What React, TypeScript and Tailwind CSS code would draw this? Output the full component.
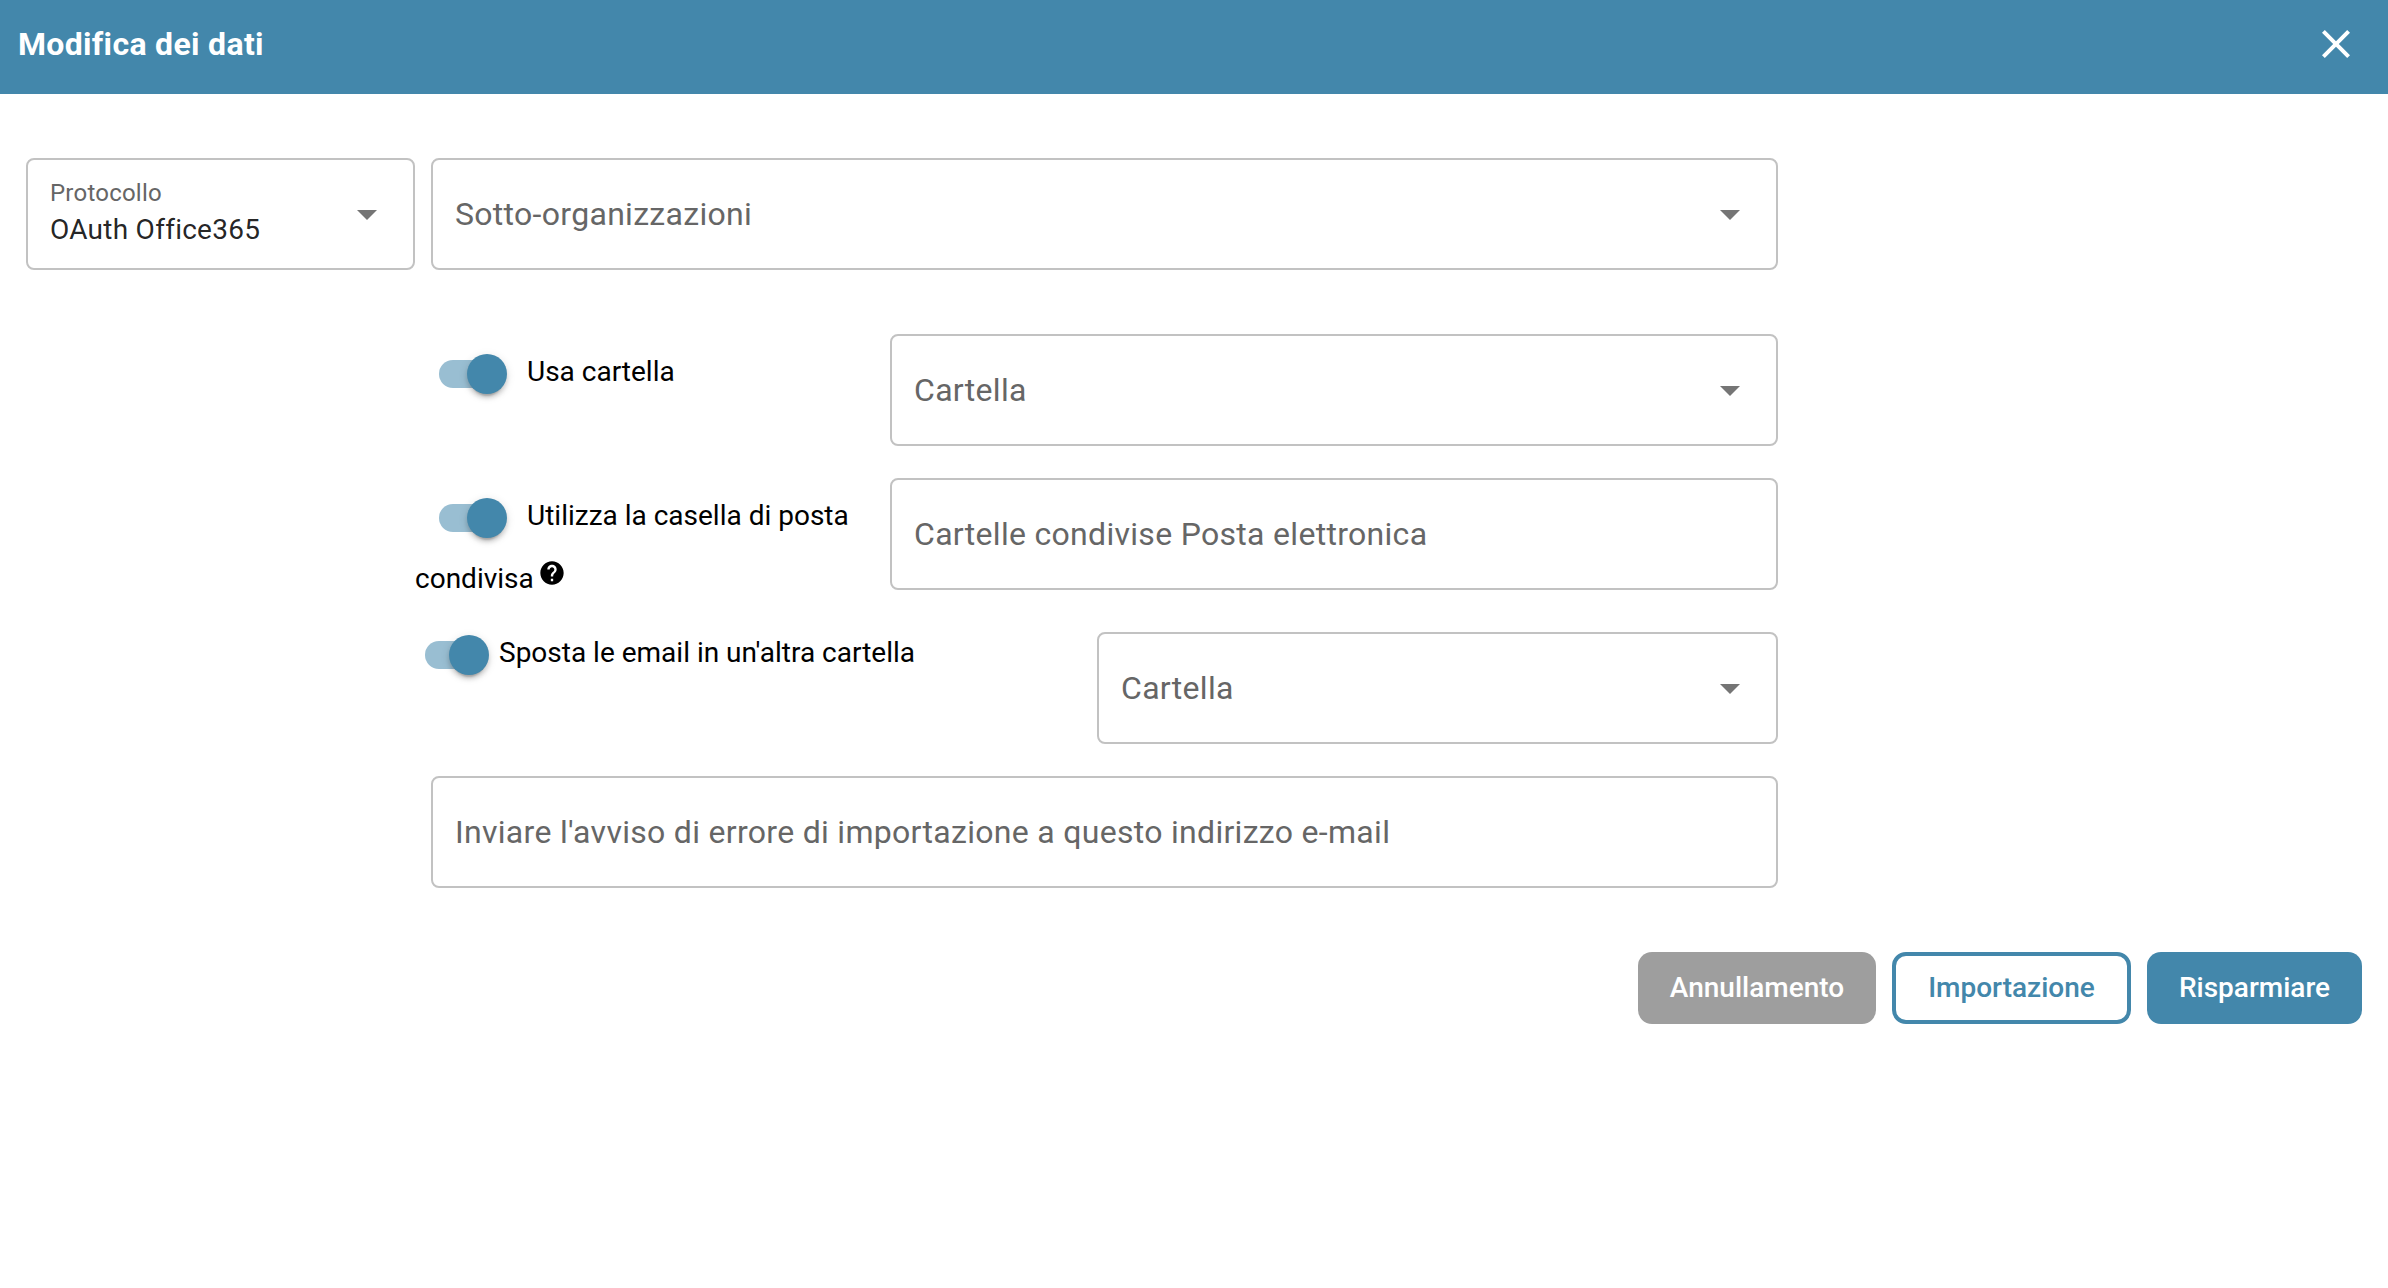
function Arrow() {
  return (
    <svg viewBox="0 0 24 24" className="ml-auto size-12 shrink-0 fill-[#757575]">
      <path d="M7 10l5 5 5-5z" />
    </svg>
  );
}

function Field({ label, className, select = false }: { label: string; className: string; select?: boolean }) {
  return (
    <div className={`flex h-28 items-center rounded-lg border-2 border-[#c2c2c2] px-[22px] ${className}`}>
      <span className="text-[32px] leading-10 tracking-[0.3px] whitespace-nowrap text-[#666666]">{label}</span>
      {select && <Arrow />}
    </div>
  );
}

function Toggle({ className, track }: { className: string; track: string }) {
  return (
    <span className={`flex h-10 shrink-0 items-center ${className}`}>
      <span className={`h-7 rounded-full bg-[#4387ab]/54 ${track}`} />
      <span className="-ml-7 size-10 rounded-full bg-[#4387ab] shadow-[0_6px_2px_-4px_rgba(0,0,0,0.2),0_4px_4px_rgba(0,0,0,0.14),0_2px_10px_rgba(0,0,0,0.12)]" />
    </span>
  );
}

export default function App() {
  return (
    <div className="flex min-h-[1288px] w-full flex-col bg-white font-[Roboto,sans-serif] text-[28px] leading-[42px] text-black">
      <header className="flex h-[94px] items-start justify-between bg-[#4387ab] pr-7 pl-[18px] text-white">
        <h1 className="mt-6 text-[32px] leading-10 font-bold tracking-[0.32px]">Modifica dei dati</h1>
        <svg viewBox="0 0 24 24" className="mt-5 size-12 fill-white">
          <path d="M19 6.41L17.59 5 12 10.59 6.41 5 5 6.41 10.59 12 5 17.59 6.41 19 12 13.41 17.59 19 19 17.59 13.41 12z" />
        </svg>
      </header>

      <main className="flex w-[1778px] flex-col pt-16 pl-[26px]">
        <div className="flex gap-4">
          <div className="flex h-28 w-[389px] items-center rounded-lg border-2 border-[#c2c2c2] px-[22px]">
            <div className="flex flex-col self-start pt-4">
              <span className="mb-px text-2xl leading-[34px] tracking-[0.22px] text-[#666666]">Protocollo</span>
              <span className="leading-[38px] tracking-[0.26px] text-black/87">OAuth Office365</span>
            </div>
            <Arrow />
          </div>
          <Field label="Sotto-organizzazioni" select className="flex-1" />
        </div>

        <div className="mt-16 ml-[389px] flex items-start justify-between">
          <div className="flex items-start pt-5">
            <Toggle className="ml-6" track="w-14" />
            <span className="-mt-[3px] ml-5">Usa cartella</span>
          </div>
          <Field label="Cartella" select className="w-[888px]" />
        </div>

        <div className="mt-8 ml-[389px] flex h-28 items-start justify-between">
          <div className="flex flex-col pt-5">
            <div className="flex items-start">
              <Toggle className="ml-6" track="w-14" />
              <span className="-mt-[3px] ml-5">Utilizza la casella di posta</span>
            </div>
            <div className="mt-5 flex items-start">
              <span>condivisa</span>
              <svg viewBox="0 0 24 24" className="mt-px ml-1 size-7 fill-black">
                <path d="M12 2C6.48 2 2 6.48 2 12s4.48 10 10 10 10-4.48 10-10S17.52 2 12 2zm1 17h-2v-2h2v2zm2.07-7.75l-.9.92C13.45 12.9 13 13.5 13 15h-2v-.5c0-1.1.45-2.1 1.17-2.83l1.24-1.26c.37-.36.59-.86.59-1.41 0-1.1-.9-2-2-2s-2 .9-2 2H8c0-2.21 1.79-4 4-4s4 1.79 4 4c0 .88-.36 1.68-.93 2.25z" />
              </svg>
            </div>
          </div>
          <Field label="Cartelle condivise Posta elettronica" className="w-[888px]" />
        </div>

        <div className="mt-[42px] ml-[389px] flex items-start justify-between">
          <div className="flex items-start pt-[3px]">
            <Toggle className="ml-2.5" track="w-[52px]" />
            <span className="-mt-[3px] ml-2.5">Sposta le email in un'altra cartella</span>
          </div>
          <Field label="Cartella" select className="w-[681px]" />
        </div>

        <div className="mt-8 flex pl-[405px]">
          <Field label="Inviare l'avviso di errore di importazione a questo indirizzo e-mail" className="flex-1" />
        </div>
      </main>

      <footer className="mt-16 flex justify-end gap-4 pr-[26px] font-medium">
        <button className="h-[72px] w-[238px] rounded-[14px] bg-[#9e9e9e] text-white">Annullamento</button>
        <button className="h-[72px] w-[239px] rounded-[14px] border-4 border-[#4387ab] bg-white text-[#4387ab]">Importazione</button>
        <button className="h-[72px] w-[215px] rounded-[14px] bg-[#4387ab] text-white">Risparmiare</button>
      </footer>
    </div>
  );
}
